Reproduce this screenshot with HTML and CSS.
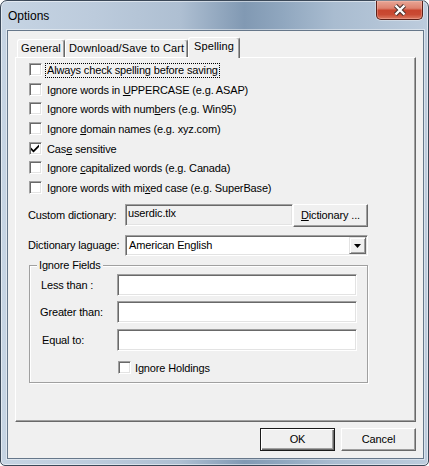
FILE: index.html
```html
<!DOCTYPE html>
<html>
<head>
<meta charset="utf-8">
<title>Options</title>
<link rel="stylesheet" href="styles.css">
</head>
<body>
<div class="window">
  <div class="titlebar">
    <span class="title">Options</span>
    <div class="close">
      <svg width="14" height="12" viewBox="0 0 14 12">
        <path d="M2.5 1.5 L11.5 10.5 M11.5 1.5 L2.5 10.5" stroke="#4a3330" stroke-width="4.4" fill="none"/>
        <path d="M2.5 1.5 L11.5 10.5 M11.5 1.5 L2.5 10.5" stroke="#ffffff" stroke-width="2.4" fill="none"/>
      </svg>
    </div>
  </div>
  <div class="client">
    <div class="tabs">
      <div class="tab tab-general">General</div>
      <div class="tab tab-download">Download/Save to Cart</div>
      <div class="tab tab-active">Spelling</div>
    </div>
    <div class="panel">
      <div class="checks">
        <div class="check-row"><span class="box"></span><span class="label focus">Always check spelling before saving</span></div>
        <div class="check-row"><span class="box"></span><span class="label">Ignore words in <u>U</u>PPERCASE (e.g. ASAP)</span></div>
        <div class="check-row"><span class="box"></span><span class="label">Ignore words with num<u>b</u>ers (e.g. Win95)</span></div>
        <div class="check-row"><span class="box"></span><span class="label">Ignore <u>d</u>omain names (e.g. xyz.com)</span></div>
        <div class="check-row"><span class="box checked"><svg width="11" height="11" viewBox="0 0 11 11"><path d="M1 4.5 L3.5 7 L9 1.5 L9 4 L3.5 9.5 L1 7 Z" fill="#000"/></svg></span><span class="label">Cas<u>e</u> sensitive</span></div>
        <div class="check-row"><span class="box"></span><span class="label">Ignore <u>c</u>apitalized words (e.g. Canada)</span></div>
        <div class="check-row"><span class="box"></span><span class="label">Ignore words with mi<u>x</u>ed case (e.g. SuperBase)</span></div>
      </div>
      <div class="dict-row">
        <span class="field-label">Custom dictionary:</span>
        <div class="field readonly">userdic.tlx</div>
        <div class="btn btn-dict"><span><u>D</u>ictionary ...</span></div>
      </div>
      <div class="lang-row">
        <span class="field-label">Dictionary laguage:</span>
        <div class="field combo">
          <span class="combo-text">American English</span>
          <span class="combo-btn"><svg width="7" height="4" viewBox="0 0 7 4"><path d="M0 0 H7 L3.5 4 Z" fill="#000"/></svg></span>
        </div>
      </div>
      <div class="group">
        <div class="legend">Ignore Fields</div>
        <div class="group-row row-less"><span class="group-label">Less than :</span><div class="field input"></div></div>
        <div class="group-row row-greater"><span class="group-label">Greater than:</span><div class="field input"></div></div>
        <div class="group-row row-equal"><span class="group-label">Equal to:</span><div class="field input"></div></div>
        <div class="check-row holdings"><span class="box"></span><span class="label">Ignore Holdings</span></div>
      </div>
    </div>
    <div class="buttons">
      <div class="btn btn-default">OK</div>
      <div class="btn">Cancel</div>
    </div>
  </div>
</div>
</body>
</html>
```
FILE: styles.css
```css
* { box-sizing: border-box; }
html, body { margin: 0; padding: 0; }
body {
  width: 429px;
  height: 466px;
  overflow: hidden;
  background: #ffffff;
  font-family: "Liberation Sans", Arial, sans-serif;
  font-size: 11px;
  letter-spacing: -0.15px;
  color: #000;
}
u { text-decoration: underline; text-underline-offset: 1px; }

.window {
  width: 429px;
  height: 466px;
  border: 1px solid #3b4858;
  border-radius: 7px 7px 5px 5px;
  padding: 0 4px 6px 6px;
  background: linear-gradient(90deg, #c6d4e3 0%, #bccbdc 22%, #aebfd2 42%, #8199b3 57%, #90a7bf 66%, #a9bcd0 78%, #bdccdd 100%);
  box-shadow: inset 0 0 0 1px rgba(255, 255, 255, 0.5);
  display: flex;
  flex-direction: column;
}

.titlebar {
  height: 29px;
  display: flex;
  align-items: flex-start;
  justify-content: space-between;
}
.title {
  font-size: 12px;
  letter-spacing: 0;
  line-height: 14px;
  padding-top: 8px;
  padding-left: 1px;
  color: #000;
}
.close {
  width: 47px;
  height: 19px;
  margin-right: 1px;
  border: 1px solid #5c2018;
  border-top: none;
  border-radius: 0 0 5px 5px;
  background: linear-gradient(180deg, #e8a595 0%, #de826f 40%, #c8452e 52%, #c94a33 75%, #dc7a62 100%);
  box-shadow: 0 0 0 1px rgba(255, 255, 255, 0.35), inset 0 0 0 1px rgba(255, 200, 190, 0.35);
  display: flex;
  align-items: center;
  justify-content: center;
}

.client {
  height: 429px;
  border: 1px solid #66778a;
  box-shadow: 0 0 0 1px rgba(255, 255, 255, 0.45);
  background: #f0f0f0;
  padding: 6px 7px 0 7px;
  display: flex;
  flex-direction: column;
}

.tabs {
  height: 21px;
  display: flex;
  align-items: flex-end;
  padding-left: 2px;
  margin-bottom: -1px;
  position: relative;
  z-index: 1;
}
.tab {
  flex: none;
  height: 18px;
  margin-bottom: 1px;
  border: 1px solid #fff;
  border-bottom: none;
  border-right-color: #696969;
  border-radius: 3px 3px 0 0;
  box-shadow: inset -1px 0 #a0a0a0;
  background: #f0f0f0;
  text-align: center;
  line-height: 13px;
  padding-top: 2px;
  white-space: nowrap;
  letter-spacing: 0.1px;
}
.tab-general { width: 48px; }
.tab-download { width: 123px; }
.tab-active { width: 52px; height: 21px; margin-bottom: 0; }

.panel {
  height: 365px;
  border: 1px solid;
  border-color: #fff #696969 #696969 #fff;
  box-shadow: inset -1px -1px #a0a0a0;
  background: #f0f0f0;
  padding-top: 2px;
  display: flex;
  flex-direction: column;
}

.checks {
  height: 144px;
  padding-left: 13px;
  display: flex;
  flex-direction: column;
}
.check-row {
  height: 19.67px;
  display: flex;
  align-items: flex-start;
  flex: none;
}
.box {
  flex: none;
  width: 13px;
  height: 13px;
  margin-top: 3px;
  border: 1px solid;
  border-color: #a0a0a0 #fff #fff #a0a0a0;
  box-shadow: inset 1px 1px #696969, inset -1px -1px #e3e3e3;
  background: #fff;
  display: flex;
}
.label {
  margin-left: 5px;
  margin-top: 4px;
  line-height: 13px;
  white-space: nowrap;
}
.label.focus {
  margin-left: 4px;
  padding: 0 1px;
  outline: 1px dotted #000;
}

.field {
  border: 1px solid;
  border-color: #a0a0a0 #fff #fff #a0a0a0;
  box-shadow: inset 1px 1px #696969, inset -1px -1px #e3e3e3;
  background: #fff;
}

.dict-row {
  height: 23px;
  display: flex;
  align-items: flex-start;
  padding-left: 12px;
}
.field-label {
  width: 97px;
  line-height: 13px;
  white-space: nowrap;
}
.dict-row .field-label { margin-top: 5px; }
.readonly {
  width: 168px;
  height: 22px;
  background: #f0f0f0;
  padding: 2px 2px;
  line-height: 13px;
}

.btn {
  width: 75px;
  height: 23px;
  border: 1px solid;
  border-color: #fff #696969 #696969 #fff;
  box-shadow: inset -1px -1px #a0a0a0;
  background: #f0f0f0;
  display: flex;
  align-items: center;
  justify-content: center;
  line-height: 13px;
  white-space: nowrap;
}
.btn-default {
  border-color: #1a1a1a;
  box-shadow: inset 1px 1px #fff, inset -1px -1px #696969, inset -2px -2px #a0a0a0;
}

.lang-row {
  height: 21px;
  margin-top: 8px;
  display: flex;
  align-items: center;
  padding-left: 12px;
}
.combo {
  width: 243px;
  height: 21px;
  display: flex;
  align-items: center;
  justify-content: space-between;
  padding: 0 1px 0 3px;
  line-height: 13px;
}
.combo-btn {
  width: 17px;
  height: 17px;
  border: 1px solid;
  border-color: #e3e3e3 #696969 #696969 #e3e3e3;
  box-shadow: inset 1px 1px #fff, inset -1px -1px #a0a0a0;
  background: #f0f0f0;
  display: flex;
  align-items: center;
  justify-content: center;
}

.group {
  width: 339px;
  height: 118px;
  margin: 9px 0 0 13px;
  border: 1px solid #a0a0a0;
  box-shadow: inset 1px 1px #fff, 1px 1px #fff;
  display: flex;
  flex-direction: column;
}
.legend {
  align-self: flex-start;
  margin: -7px 0 0 7px;
  padding: 0 2px;
  line-height: 12px;
  background: #f0f0f0;
  white-space: nowrap;
}
.group-row {
  height: 22px;
  display: flex;
  align-items: center;
  flex: none;
}
.row-less { margin-top: 3px; }
.row-greater { margin-top: 5px; }
.row-equal { margin-top: 6px; }
.group-label {
  width: 87px;
  line-height: 13px;
  white-space: nowrap;
}
.row-less .group-label { padding-left: 11px; }
.row-greater .group-label { padding-left: 10px; }
.row-equal .group-label { padding-left: 12px; }
.input {
  width: 240px;
  height: 22px;
}
.holdings {
  margin-top: 7px;
  padding-left: 88px;
}
.holdings .label { margin-left: 4px; }

.buttons {
  margin-top: 6px;
  display: flex;
  justify-content: flex-end;
  gap: 6px;
}
```
